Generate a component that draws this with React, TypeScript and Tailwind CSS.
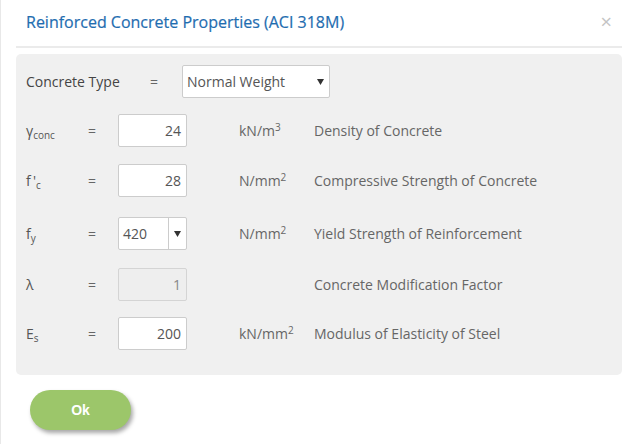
import React from "react";

function Caret() {
  return (
    <svg width="7" height="6" viewBox="0 0 7 6" className="shrink-0">
      <path d="M0 0 L7 0 L3.5 6 Z" fill="#333" />
    </svg>
  );
}

function NumBox({ value, disabled }: { value: string; disabled?: boolean }) {
  return (
    <div
      className={
        "w-[69px] h-[33px] border rounded-[2px] flex items-center justify-end pr-[5px] text-[14px] " +
        (disabled
          ? "bg-[#eeeeee] border-[#d4d4d4] text-[#888]"
          : "bg-white border-[#cccccc] text-[#555]")
      }
    >
      {value}
    </div>
  );
}

function Sub({ children }: { children: React.ReactNode }) {
  return <span className="text-[10px] relative top-[3px]">{children}</span>;
}

function Sup({ children }: { children: React.ReactNode }) {
  return <span className="text-[10px] relative top-[-5px]">{children}</span>;
}

function Row({
  label,
  box,
  unit,
  desc,
  className,
}: {
  label: React.ReactNode;
  box: React.ReactNode;
  unit?: React.ReactNode;
  desc: string;
  className?: string;
}) {
  return (
    <div className={"flex items-center h-[33px] " + (className ?? "")}>
      <div className="w-[60px] text-[#555]">{label}</div>
      <div className="w-[32px] text-[#666] pl-[2px]">=</div>
      {box}
      <div className="w-[52px]" />
      <div className="w-[75px] text-[#666]">{unit}</div>
      <div className="text-[#666]">{desc}</div>
    </div>
  );
}

export default function App() {
  return (
    <div className="w-[638px] h-[444px] bg-white font-['Open_Sans',sans-serif] text-[14px] overflow-hidden shadow-[inset_1px_0_0_#e8e8e8]">
      <div className="mx-4">
        {/* header */}
        <div className="h-[48px] pb-[2px] border-b-2 border-[#ebebeb] flex items-center justify-between pl-[10px] pr-[10px]">
          <h1 className="text-[16px] text-[#1f6db0] [-webkit-text-stroke:0.2px_#1f6db0]">
            Reinforced Concrete Properties (ACI 318M)
          </h1>
          <span className="text-[#c4c4c4] text-[20px] leading-none">×</span>
        </div>

        {/* properties panel */}
        <div className="mt-[6px] bg-[#f0f0f0] rounded-[5px] pl-[10px] pt-[11px] pb-[25px]">
          <div className="flex items-center h-[33px]">
            <div className="w-[124px] text-[#444]">Concrete Type</div>
            <div className="w-[32px] text-[#666]">=</div>
            <div className="w-[148px] h-[33px] bg-white border border-[#cccccc] rounded-[2px] flex items-center justify-between pl-[4px] pr-[5px] text-[#555]">
              <span>Normal Weight</span>
              <Caret />
            </div>
          </div>

          <Row
            className="mt-[16px]"
            label={
              <span>
                γ<Sub>conc</Sub>
              </span>
            }
            box={<NumBox value="24" />}
            unit={
              <span>
                kN/m<Sup>3</Sup>
              </span>
            }
            desc="Density of Concrete"
          />

          <Row
            className="mt-[17px]"
            label={
              <span>
                f&thinsp;'<Sub>c</Sub>
              </span>
            }
            box={<NumBox value="28" />}
            unit={
              <span>
                N/mm<Sup>2</Sup>
              </span>
            }
            desc="Compressive Strength of Concrete"
          />

          <Row
            className="mt-[20px]"
            label={
              <span>
                f<Sub>y</Sub>
              </span>
            }
            box={
              <div className="w-[69px] h-[33px] bg-white border border-[#cccccc] rounded-[2px] flex items-center text-[#555]">
                <div className="w-[49px] pl-[4px]">420</div>
                <div className="flex-1 h-full border-l border-[#cccccc] flex items-center justify-center">
                  <Caret />
                </div>
              </div>
            }
            unit={
              <span>
                N/mm<Sup>2</Sup>
              </span>
            }
            desc="Yield Strength of Reinforcement"
          />

          <Row
            className="mt-[18px]"
            label={<span>λ</span>}
            box={<NumBox value="1" disabled />}
            desc="Concrete Modification Factor"
          />

          <Row
            className="mt-[16px]"
            label={
              <span>
                E<Sub>s</Sub>
              </span>
            }
            box={<NumBox value="200" />}
            unit={
              <span>
                kN/mm<Sup>2</Sup>
              </span>
            }
            desc="Modulus of Elasticity of Steel"
          />
        </div>

        {/* footer */}
        <div className="mt-[15px] pl-[14px]">
          <button className="w-[101px] h-[40px] rounded-full bg-[#9cc66a] text-white font-bold text-[14px] font-['Liberation_Sans',sans-serif] shadow-[2px_3px_4px_rgba(0,0,0,0.35)]">
            Ok
          </button>
        </div>
      </div>
    </div>
  );
}
